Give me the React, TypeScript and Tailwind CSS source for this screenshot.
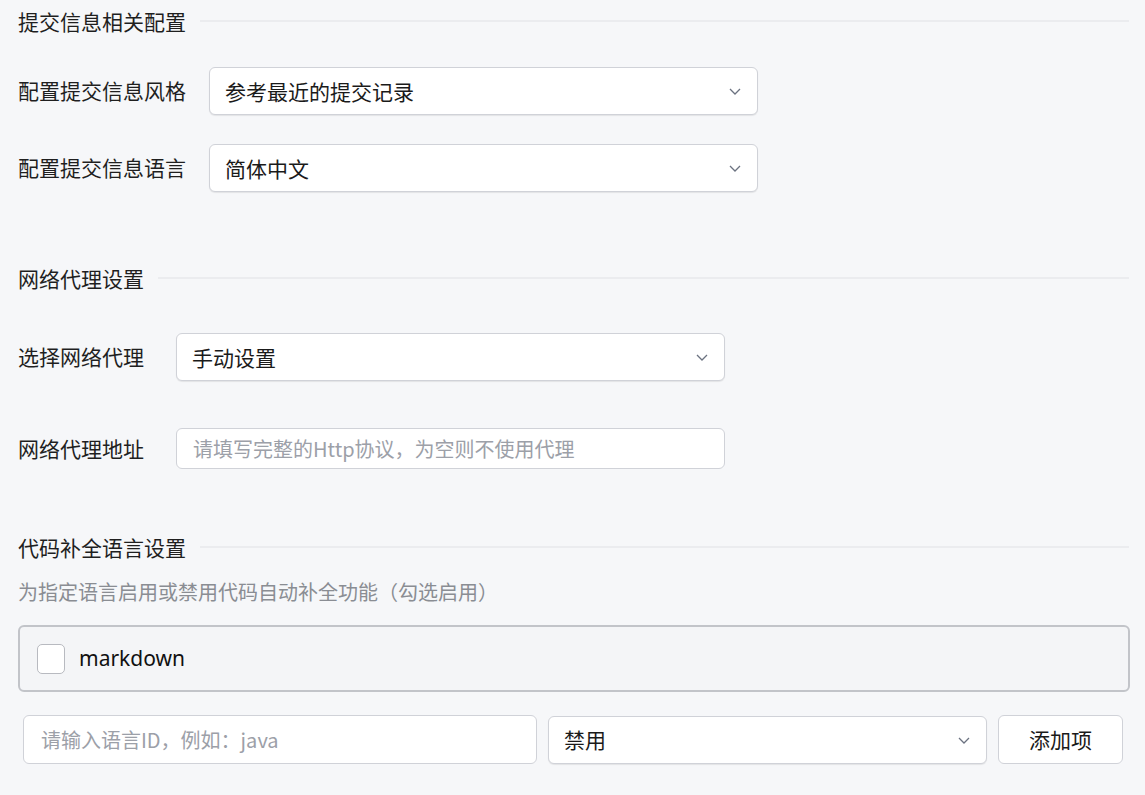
import React from "react";

const font = { fontFamily: '"Noto Sans CJK SC", "Noto Sans", sans-serif' };

function Chevron() {
  return (
    <svg width="16" height="16" viewBox="0 0 16 16" fill="none" stroke="#6b7280" strokeWidth="1.3">
      <path d="M3 6l5 5 5-5" />
    </svg>
  );
}

function Header({ title }: { title: string }) {
  return (
    <div className="flex items-center gap-[14px] h-[22px]">
      <span className="text-[21px] text-[#1f1f1f] whitespace-nowrap leading-none">{title}</span>
      <div className="flex-1 h-[2px] bg-[#ebecef]" />
    </div>
  );
}

function Select({ value, w }: { value: string; w: string }) {
  return (
    <div className={`${w} h-[48px] bg-white border border-[#d0d2d8] rounded-[6px] flex items-center justify-between pl-[15px] pr-[14px] shadow-[0_1px_1px_rgba(0,0,0,0.08)]`}>
      <span className="text-[21px] leading-none text-[#1a1a1a]">{value}</span>
      <Chevron />
    </div>
  );
}

export default function App() {
  return (
    <div style={font} className="w-[1145px] h-[795px] bg-[#f6f7f9] overflow-hidden pl-[18px] pr-[16px] pt-[10px]">
      <Header title="提交信息相关配置" />
      <div className="mt-[35px] flex items-center gap-[23px]">
        <span className="text-[21px] text-[#1f1f1f]">配置提交信息风格</span>
        <Select value="参考最近的提交记录" w="w-[549px]" />
      </div>
      <div className="mt-[29px] flex items-center gap-[23px]">
        <span className="text-[21px] text-[#1f1f1f]">配置提交信息语言</span>
        <Select value="简体中文" w="w-[549px]" />
      </div>
      <div className="mt-[75px]"><Header title="网络代理设置" /></div>
      <div className="mt-[44px] flex items-center gap-[32px]">
        <span className="text-[21px] text-[#1f1f1f]">选择网络代理</span>
        <Select value="手动设置" w="w-[549px]" />
      </div>
      <div className="mt-[47px] flex items-center gap-[32px]">
        <span className="text-[21px] text-[#1f1f1f]">网络代理地址</span>
        <div className="w-[549px] h-[41px] bg-white border border-[#d0d2d8] rounded-[6px] flex items-center pl-[16px]">
          <span className="text-[20px] leading-none text-[#9ca0a8]">请填写完整的Http协议，为空则不使用代理</span>
        </div>
      </div>
      <div className="mt-[67px]"><Header title="代码补全语言设置" /></div>
      <div className="mt-[21px] text-[20px] text-[#8a8d93] leading-[26px]">为指定语言启用或禁用代码自动补全功能（勾选启用）</div>
      <div className="mt-[20px] w-[1112px] h-[67px] border-2 border-[#c2c4c9] rounded-[6px] bg-[#f4f5f7] flex items-center pl-[17px] gap-[14px]">
        <div className="w-[28px] h-[30px] bg-white border border-[#b8bac0] rounded-[5px]" />
        <span className="text-[21px] text-[#111]" style={{ fontFamily: '"Noto Sans", sans-serif' }}>markdown</span>
      </div>
      <div className="mt-[23px] flex items-center pl-[5px] gap-[11px]">
        <div className="w-[514px] h-[49px] bg-white border border-[#d0d2d8] rounded-[6px] flex items-center pl-[17px]">
          <span className="text-[20px] leading-none text-[#9ca0a8]">请输入语言ID，例如：java</span>
        </div>
        <Select value="禁用" w="w-[439px]" />
        <div className="w-[125px] h-[49px] bg-white border border-[#d0d2d8] rounded-[6px] flex items-center justify-center">
          <span className="text-[21px] leading-none text-[#1a1a1a]">添加项</span>
        </div>
      </div>
    </div>
  );
}
